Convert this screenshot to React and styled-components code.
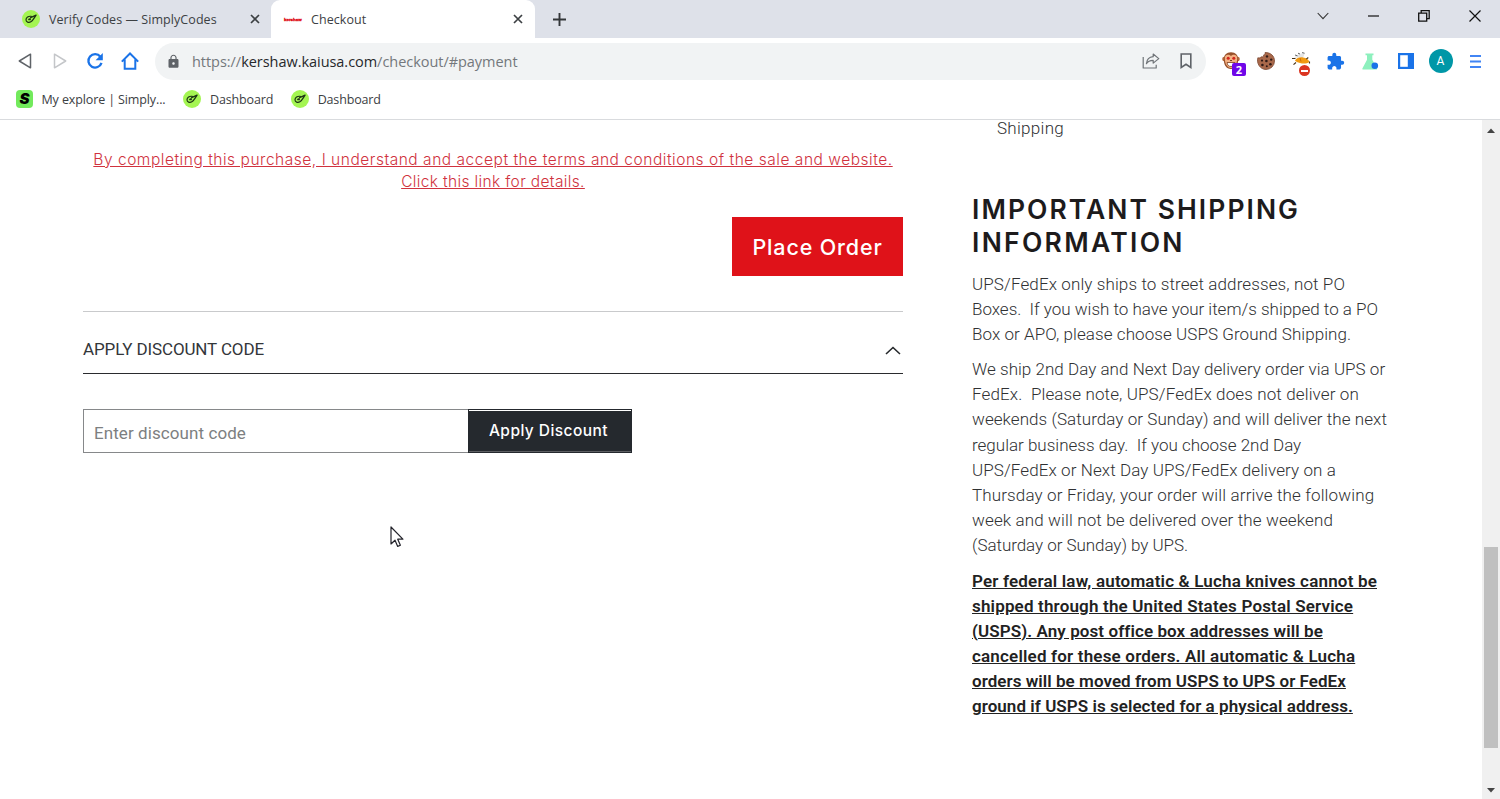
import React from "react";
import styled, { createGlobalStyle } from "styled-components";
import { MdExtension, MdLock } from "react-icons/md";

const introLines = [
  ["UPS/FedEx only ships to street addresses, not PO", 0.11],
  ["Boxes.\u00a0 If you wish to have your item/s shipped to a PO", -0.01],
  ["Box or APO, please choose USPS Ground Shipping.", 0.07],
];

const deliveryLines = [
  ["We ship 2nd Day and Next Day delivery order via UPS or", 0.03],
  ["FedEx.\u00a0 Please note, UPS/FedEx does not deliver on", 0.12],
  ["weekends (Saturday or Sunday) and will deliver the next", 0.06],
  ["regular business day.\u00a0 If you choose 2nd Day", 0],
  ["UPS/FedEx or Next Day UPS/FedEx delivery on a", 0.09],
  ["Thursday or Friday, your order will arrive the following", 0.14],
  ["week and will not be delivered over the weekend", 0.13],
  ["(Saturday or Sunday) by UPS.", -0.05],
];

const lawLines = [
  ["Per federal law, automatic & Lucha knives cannot be", 0.18],
  ["shipped through the United States Postal Service", 0.17],
  ["(USPS). Any post office box addresses will be", 0.09],
  ["cancelled for these orders. All automatic & Lucha", 0.18],
  ["orders will be moved from USPS to UPS or FedEx", 0.05],
  ["ground if USPS is selected for a physical address.", 0.05],
];

const CodesIcon = () => (
  <svg width="18" height="18" viewBox="0 0 18 18">
    <circle cx="9" cy="9" r="9" fill="#a4f552" />
    <path
      d="M9.200 6.300C6.400 5.900 4 7.500 4 9.700c0 2.400 2.700 3.300 4.900 2.100 1.900-1 2.300-2.700 3.600-4.300M6.700 9.500c1-1.200 2.300-.6 1.300.4M8.600 7.600l5.500-2.500-2.100 3.200"
      fill="none"
      stroke="#1c3313"
      strokeWidth="1.200"
      strokeLinecap="round"
      strokeLinejoin="round"
    />
  </svg>
);

const CloseIcon = () => (
  <svg width="10" height="10" viewBox="0 0 10 10">
    <path d="M1 1l8 8M9 1l-8 8" stroke="#3c4043" strokeWidth="1.700" />
  </svg>
);

const TriangleIcon = ({ color, flip }) => (
  <svg width="14" height="16" viewBox="0 0 14 16" transform={flip ? "scale(-1 1)" : undefined}>
    <path d="M12.500 1.200v13.600L1.300 8z" fill="none" stroke={color} strokeWidth="1.500" strokeLinejoin="round" />
  </svg>
);

const ReloadIcon = () => (
  <svg width="18" height="18" viewBox="0 0 18 18">
    <path d="M14.400 4.700A6.700 6.700 0 1 0 15.500 10.800" fill="none" stroke="#1a73e8" strokeWidth="2.300" />
    <path d="M16.800 1v7.200H9.600z" fill="#1a73e8" />
  </svg>
);

const HomeIcon = () => (
  <svg width="18" height="18" viewBox="0 0 18 18">
    <path d="M.8 9.600L9 1.500l8.200 8.100M3.700 7.500v9.200h10.600V7.500" fill="none" stroke="#1a73e8" strokeWidth="2" />
  </svg>
);

const ShareIcon = () => (
  <svg width="18" height="16" viewBox="0 0 18 16">
    <path
      d="M1.200 4v11h13v-3.300M11.200 1l5.600 4.600-5.600 4.500V7.400c-3.200 0-5.400 1-6.800 3.300.4-4.100 2.800-6.700 6.800-7z"
      fill="none"
      stroke="#6f7377"
      strokeWidth="1.200"
      strokeLinejoin="round"
    />
  </svg>
);

const BookmarkIcon = () => (
  <svg width="12" height="16" viewBox="0 0 12 16">
    <path d="M1.200 1h9.600v13.500L6 11.300l-4.800 3.200z" fill="none" stroke="#5f6368" strokeWidth="1.600" />
  </svg>
);

const MonkeyIcon = () => (
  <svg width="18" height="18" viewBox="0 0 18 18">
    <circle cx="2.500" cy="7" r="2.300" fill="#b5673a" />
    <circle cx="15.500" cy="7" r="2.300" fill="#b5673a" />
    <path d="M9 .3c4.600 0 7.200 3 7.200 7.200 0 5.500-2.600 9.500-7.200 9.500s-7.200-4-7.200-9.500C1.800 3.300 4.400.3 9 .3z" fill="#96502a" />
    <path d="M6 2.800c1.200 0 2.300.5 3 1.300.7-.8 1.800-1.300 3-1.300 2 0 3.200 1.500 3.200 3.400 0 5.200-2.500 9.800-6.200 9.800S2.800 11.400 2.800 6.200c0-1.900 1.200-3.400 3.200-3.400z" fill="#f3b183" />
    <circle cx="6.200" cy="6.300" r="1.500" fill="#d4261c" />
    <circle cx="11.800" cy="6.300" r="1.500" fill="#d4261c" />
    <path d="M5 10.500h8c-.3 2.500-1.600 4-4 4s-3.700-1.500-4-4z" fill="#fff" stroke="#7c3c1c" strokeWidth=".8" />
    <path d="M8 8.500h2" stroke="#7c3c1c" strokeWidth="1" />
  </svg>
);

const CookieIcon = () => (
  <svg width="18" height="18" viewBox="0 0 18 18">
    <path
      d="M8 .6c.3 1.500-.3 2.200-1.300 2.300.2 1.700-1.200 2.600-2.700 1.900C3.500 6 2.300 6.200.9 5.700-.8 11 3 17.500 9 17.500a8.500 8.500 0 0 0 8.500-8.500C17.500 4 13.500.2 8 .6z"
      fill="#a9694b"
      stroke="#7b4630"
      strokeWidth=".8"
    />
    <g fill="#2f1a16">
      <circle cx="10" cy="4.400" r="1.200" />
      <circle cx="14.200" cy="7.600" r="1.200" />
      <circle cx="9.400" cy="9" r="1.300" />
      <circle cx="5" cy="8.600" r="1.100" />
      <circle cx="5.400" cy="13" r="1.300" />
      <circle cx="9.800" cy="14.300" r="1" />
      <circle cx="13.400" cy="12.200" r="1.300" />
    </g>
  </svg>
);

const BeeIcon = () => (
  <svg width="20" height="18" viewBox="0 0 20 18">
    <path d="M3 5.500L8 2l6-1-2 5z" fill="#e4e4e4" />
    <path d="M4 3l2.500.8M7 1.200l2 .8M11 .6l2.500.6" stroke="#555" strokeWidth=".9" />
    <path d="M4 8.500c1.500-2.600 5-3.600 8-3.100 3.400.3 5.800 1.900 6.300 4.600-2.500 1.800-6.300 1.800-9.300.9C6.500 10.500 4.800 9.800 4 8.500z" fill="#f29a11" />
    <path d="M1 6.500h3.500M17.300 5.500l-2 1.700M18.500 9.500v2M5 10.500l-2.500 2.200" stroke="#463015" strokeWidth="1.100" />
    <path d="M9 6l1 3.500" stroke="#c66a07" strokeWidth=".9" />
  </svg>
);

const FlaskIcon = () => (
  <svg width="17" height="17" viewBox="0 0 17 17">
    <path d="M3.500.5h8v1.700h-1.200v4.500l4.700 8.500c.4.800 0 1.300-.8 1.300H1.300c-.9 0-1.200-.6-.8-1.300l4.500-8.500V2.200H3.500z" fill="#8df0bd" />
    <circle cx="12.800" cy="12.800" r="3.300" fill="#1a73e8" />
  </svg>
);

const PanelIcon = () => (
  <svg width="16" height="16" viewBox="0 0 16 16">
    <path d="M0 0h16v16H0z" fill="#1a73e8" />
    <path d="M2.200 2.200h7.600v11.600H2.200z" fill="#fff" />
  </svg>
);

const MenuIcon = () => (
  <svg width="11" height="15" viewBox="0 0 11 15">
    <path d="M0 2h11M0 7.500h11M0 13h11" stroke="#4285f4" strokeWidth="1.900" />
  </svg>
);

const Lines = ({ items }) =>
  items.map(([text, spacing]) => (
    <Line key={text} $spacing={spacing}>
      {text}
    </Line>
  ));

const App = () => {
  return (
    <>
      <GlobalStyle />
      <Browser>
        <TabStrip>
          <Tab>
            <CodesIcon />
            <TabTitle>Verify Codes — SimplyCodes</TabTitle>
            <CloseIcon />
          </Tab>
          <Tab $active>
            <KershawMark>kershaw</KershawMark>
            <TabTitle>Checkout</TabTitle>
            <CloseIcon />
          </Tab>
          <NewTab>
            <svg width="13" height="13" viewBox="0 0 13 13">
              <path d="M6.500 0v13M0 6.500h13" stroke="#333639" strokeWidth="1.900" />
            </svg>
          </NewTab>
          <WindowButtons>
            <svg width="12" height="8" viewBox="0 0 12 8">
              <path d="M.7 1L6 6.700 11.300 1" fill="none" stroke="#333" strokeWidth="1.100" />
            </svg>
            <svg width="11" height="2" viewBox="0 0 11 2">
              <path d="M0 1h11" stroke="#111" strokeWidth="1.200" />
            </svg>
            <svg width="12" height="12" viewBox="0 0 12 12">
              <path d="M.7 3.200h8v8h-8zM3.200 3V.7h8v8H9" fill="none" stroke="#111" strokeWidth="1.300" />
            </svg>
            <svg width="12" height="12" viewBox="0 0 12 12">
              <path d="M.5.5l11 11M11.500.5l-11 11" stroke="#111" strokeWidth="1.200" />
            </svg>
          </WindowButtons>
        </TabStrip>

        <Toolbar>
          <NavButtons>
            <TriangleIcon color="#5f6368" />
            <TriangleIcon color="#c4c6c9" flip />
            <ReloadIcon />
            <HomeIcon />
          </NavButtons>
          <Address>
            <MdLock size={15} color="#5f6368" />
            <Url>
              https://<b>kershaw.kaiusa.com</b>/checkout/#payment
            </Url>
            <ShareIcon />
            <BookmarkIcon />
          </Address>
          <Extensions>
            <Slot>
              <MonkeyIcon />
              <CountBadge>2</CountBadge>
            </Slot>
            <Slot>
              <CookieIcon />
            </Slot>
            <Slot>
              <BeeIcon />
              <StopBadge />
            </Slot>
            <Slot>
              <MdExtension size={19} color="#1a73e8" />
            </Slot>
            <Slot>
              <FlaskIcon />
            </Slot>
            <Slot>
              <PanelIcon />
            </Slot>
            <Slot>
              <Avatar>A</Avatar>
            </Slot>
            <Slot>
              <MenuIcon />
            </Slot>
          </Extensions>
        </Toolbar>

        <Bookmarks>
          <Bookmark>
            <ExploreMark>S</ExploreMark>
            <BookmarkText $spacing={-0.12}>My explore | Simply...</BookmarkText>
          </Bookmark>
          <Bookmark>
            <CodesIcon />
            <BookmarkText $spacing={-0.15}>Dashboard</BookmarkText>
          </Bookmark>
          <Bookmark>
            <CodesIcon />
            <BookmarkText $spacing={-0.15}>Dashboard</BookmarkText>
          </Bookmark>
        </Bookmarks>

        <Page>
          <Main>
            <Terms>
              <Line $spacing={0.53}>
                By completing this purchase, I understand and accept the terms and conditions of the sale and website.
              </Line>
              <Line $spacing={0.36}>Click this link for details.</Line>
            </Terms>
            <PlaceOrder>Place Order</PlaceOrder>
            <DiscountTitle>
              APPLY DISCOUNT CODE
              <svg width="16" height="9" viewBox="0 0 16 9">
                <path d="M1 8l7-6.500L15 8" fill="none" stroke="#26292c" strokeWidth="1.600" />
              </svg>
            </DiscountTitle>
            <DiscountForm>
              <DiscountInput placeholder="Enter discount code" />
              <ApplyButton>Apply Discount</ApplyButton>
            </DiscountForm>
          </Main>
          <Side>
            <Method>Shipping</Method>
            <Heading>
              <Line $spacing={2.05}>IMPORTANT SHIPPING</Line>
              <Line $spacing={2.3}>INFORMATION</Line>
            </Heading>
            <Paragraph>
              <Lines items={introLines} />
            </Paragraph>
            <Paragraph>
              <Lines items={deliveryLines} />
            </Paragraph>
            <Law>
              <Lines items={lawLines} />
            </Law>
          </Side>
          <Scrollbar>
            <svg width="8" height="5" viewBox="0 0 8 5">
              <path d="M0 5l4-4.500L8 5z" fill="#444" />
            </svg>
            <Thumb />
            <svg width="8" height="5" viewBox="0 0 8 5">
              <path d="M0 0h8L4 4.500z" fill="#444" />
            </svg>
          </Scrollbar>
        </Page>

        <Cursor width="14" height="22" viewBox="0 0 14 22">
          <path
            d="M1 1v17l4-3.800 2.700 6.200 2.700-1.200-2.700-6h5.200z"
            fill="#fff"
            stroke="#23232b"
            strokeWidth="1.200"
            strokeLinejoin="round"
          />
        </Cursor>
      </Browser>
    </>
  );
};

const GlobalStyle = createGlobalStyle`
  * {
    box-sizing: border-box;
  }
  body {
    margin: 0;
    background: #fff;
    overflow: hidden;
  }
  svg {
    display: block;
    flex-shrink: 0;
  }
`;

const Browser = styled.div`
  position: relative;
  display: flex;
  flex-direction: column;
  width: 1500px;
  height: 799px;
  font-family: "Open Sans", sans-serif;
  font-size: 12.5px;
  color: #3c4043;
`;

const TabStrip = styled.div`
  display: flex;
  align-items: center;
  height: 38px;
  background: #dee1e9;
`;

const Tab = styled.div`
  display: flex;
  align-items: center;
  gap: 9px;
  width: ${(props) => (props.$active ? "264px" : "271px")};
  height: 38px;
  padding: 0 ${(props) => (props.$active ? "12px 0 13px" : "11px 0 22px")};
  background: ${(props) => (props.$active ? "#fff" : "transparent")};
  border-radius: 9px 9px 0 0;
`;

const TabTitle = styled.div`
  flex: 1;
  letter-spacing: 0.06px;
  white-space: nowrap;
`;

const KershawMark = styled.div`
  width: 18px;
  font: bold 4.4px "Liberation Sans", sans-serif;
  color: #e0131b;
  -webkit-text-stroke: 0.4px #e0131b;
`;

const NewTab = styled.div`
  margin-left: 18px;
`;

const WindowButtons = styled.div`
  display: flex;
  align-items: center;
  gap: 39px;
  margin: -6px 19px 0 auto;
`;

const Toolbar = styled.div`
  display: flex;
  align-items: center;
  height: 46px;
  padding-left: 7px;
`;

const NavButtons = styled.div`
  display: grid;
  grid-template-columns: repeat(4, 35px);
  align-items: center;
  justify-items: center;
  width: 148px;
`;

const Address = styled.div`
  display: flex;
  align-items: center;
  width: 1051px;
  height: 37px;
  padding: 0 14px 0 11px;
  border-radius: 19px;
  background: #f1f3f4;
`;

const Url = styled.div`
  flex: 1;
  margin-left: 11px;
  font-size: 14.5px;
  letter-spacing: -0.04px;
  color: #74787c;

  b {
    font-weight: 400;
    color: #26282b;
  }

  & + svg {
    margin-right: 20px;
  }
`;

const Extensions = styled.div`
  display: flex;
  margin-left: 7px;
`;

const Slot = styled.div`
  position: relative;
  display: flex;
  align-items: center;
  justify-content: center;
  width: 35px;
  height: 24px;
`;

const CountBadge = styled.div`
  position: absolute;
  left: 19px;
  top: 14px;
  width: 14px;
  height: 13px;
  border-radius: 2px;
  background: #6f06e8;
  color: #fff;
  font: bold 11px/13px "Open Sans", sans-serif;
  text-align: center;
`;

const StopBadge = styled.div`
  position: absolute;
  left: 16px;
  top: 16px;
  display: flex;
  align-items: center;
  justify-content: center;
  width: 11px;
  height: 11px;
  border-radius: 50%;
  background: #db3521;

  &::after {
    content: "";
    width: 7px;
    height: 2px;
    background: #fff;
  }
`;

const Avatar = styled.div`
  width: 24px;
  height: 24px;
  flex-shrink: 0;
  border-radius: 50%;
  background: #0097a7;
  color: #fff;
  font: 12px/24px Roboto, sans-serif;
  text-align: center;
`;

const Bookmarks = styled.div`
  display: flex;
  gap: 18px;
  height: 36px;
  padding: 6px 0 0 16px;
  border-bottom: 1px solid #d9dbde;
`;

const Bookmark = styled.div`
  display: flex;
  align-items: center;
  gap: 8.5px;
  height: 18px;
`;

const BookmarkText = styled.div`
  letter-spacing: ${(props) => props.$spacing}px;
  white-space: nowrap;
`;

const ExploreMark = styled.div`
  width: 17px;
  height: 18px;
  border-radius: 4px;
  background: #72ea5c;
  color: #000;
  font: italic 900 15px/18px Inter, sans-serif;
  text-align: center;
`;

const Page = styled.div`
  display: flex;
  flex: 1;
  overflow: hidden;
`;

const Main = styled.div`
  width: 820px;
  margin-left: 83px;
  font-family: Roboto, sans-serif;
`;

const Line = styled.div`
  letter-spacing: ${(props) => props.$spacing}px;
  white-space: nowrap;
`;

const Terms = styled.div`
  display: flex;
  flex-direction: column;
  align-items: center;
  margin-top: 29px;
  font: 300 15.5px/22px Inter, sans-serif;
  color: #d0323e;
  text-decoration: underline;
`;

const PlaceOrder = styled.button`
  display: block;
  width: 171px;
  height: 59px;
  margin: 24px 0 35px auto;
  padding: 0;
  border: 0;
  background: #df1219;
  color: #fff;
  font: 500 21.5px Inter, sans-serif;
  letter-spacing: 0.85px;
`;

const DiscountTitle = styled.div`
  display: flex;
  align-items: center;
  justify-content: space-between;
  height: 63px;
  padding: 13px 2px 0 0;
  border-top: 1px solid #c9cacc;
  border-bottom: 1px solid #2a2b2e;
  font-size: 17px;
  letter-spacing: -0.12px;
  color: #33363a;

  svg {
    margin-top: 2px;
  }
`;

const DiscountForm = styled.div`
  display: flex;
  height: 44px;
  margin-top: 35px;
`;

const DiscountInput = styled.input`
  width: 385px;
  height: 44px;
  padding: 3px 10px 0;
  border: 1px solid #86888a;
  border-right: 0;
  border-radius: 0;
  outline: 0;
  font: 400 17px Roboto, sans-serif;
  letter-spacing: 0.08px;

  &::placeholder {
    color: #7d7f81;
  }
`;

const ApplyButton = styled.button`
  width: 164px;
  height: 44px;
  padding: 0 3px 1px 0;
  border: 1px solid #25292e;
  border-radius: 0;
  background: #25292e;
  box-shadow: inset 0 1px 0 #fff, inset 0 -1px 0 #5d5f63;
  color: #fff;
  font: 500 15.5px Inter, sans-serif;
  letter-spacing: 0.45px;
`;

const Side = styled.div`
  width: 430px;
  margin-left: 69px;
  font: 300 17px/25.1px Roboto, sans-serif;
  color: #2f3133;
`;

const Method = styled.div`
  padding-left: 25px;
  line-height: 16px;
  letter-spacing: 0.29px;
`;

const Heading = styled.h2`
  margin: 57px 0 12.5px;
  font: 600 26.5px/33px Inter, sans-serif;
  color: #1d1b1c;
`;

const Paragraph = styled.div`
  margin-bottom: 10.5px;
`;

const Law = styled(Paragraph)`
  font-weight: 600;
  line-height: 25px;
  color: #222;
  text-decoration: underline;
`;

const Scrollbar = styled.div`
  display: flex;
  flex-direction: column;
  align-items: center;
  width: 18px;
  margin-left: auto;
  padding: 8px 0 6px;
  background: #f0f0f0;
`;

const Thumb = styled.div`
  width: 14px;
  height: 201px;
  margin: 414px 0 auto;
  background: #c0c0c0;
`;

const Cursor = styled.svg`
  position: absolute;
  left: 390px;
  top: 526px;
`;

export default App;
